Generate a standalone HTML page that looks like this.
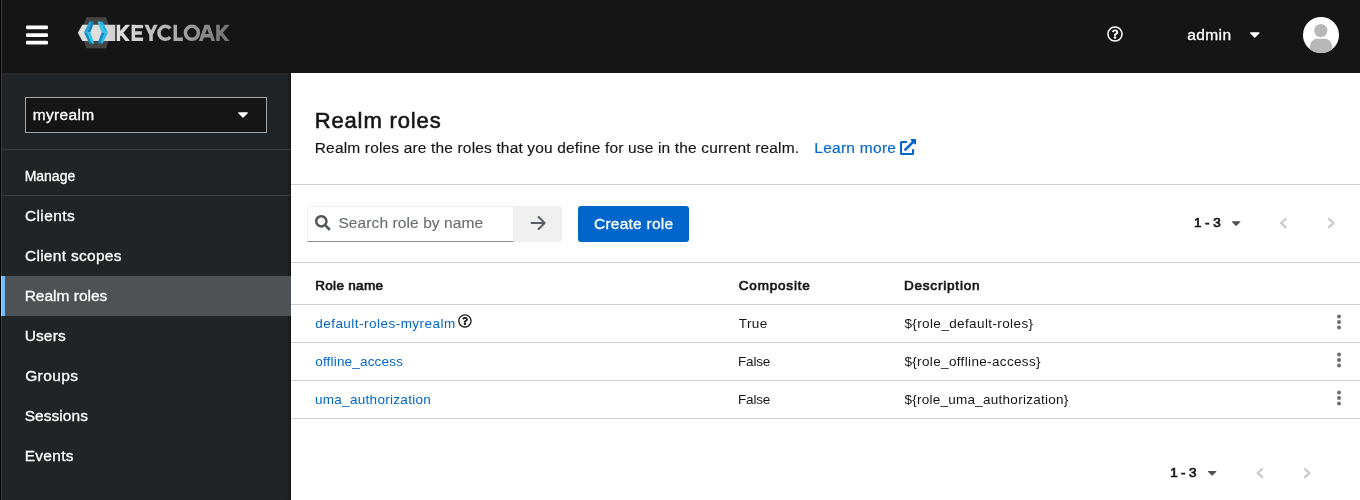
<!DOCTYPE html>
<html><head><meta charset="utf-8">
<style>
*{box-sizing:border-box;margin:0;padding:0}
html,body{width:1360px;height:500px;overflow:hidden;background:#fff;font-family:"Liberation Sans",sans-serif;color:#151515}
.abs{position:absolute}
svg{position:absolute;overflow:visible}
#edge0{left:0;top:0;width:1px;height:500px;background:#000}
#edge1{left:1px;top:0;width:1px;height:500px;background:#3d3d3d}
#header{left:2px;top:0;width:1358px;height:73px;background:#151515}
#sidebar{left:2px;top:73px;width:289px;height:427px;background:#212427}
.t{position:absolute;white-space:nowrap;line-height:1;-webkit-text-stroke:0.15px}
.w{color:#fff;-webkit-text-stroke:0.3px}
.nav{font-size:15.5px;color:#fff;-webkit-text-stroke:0.3px}
.hl{position:absolute;height:1px;background:#d2d2d2;left:291px;width:1069px}
.link{color:#0066cc}
.cell{font-size:13.5px;-webkit-text-stroke:0}
.b{font-weight:normal;-webkit-text-stroke:0.7px}
/*adj*/
#admin{letter-spacing:0.413px;margin-left:0.15px}
#myrealm{letter-spacing:0.350px;margin-left:-0.25px}
#manage{letter-spacing:-0.010px;margin-left:-0.35px}
#n1{letter-spacing:0.408px;margin-left:-0.10px}
#n2{letter-spacing:0.292px;margin-left:-0.10px}
#n3{letter-spacing:-0.005px;margin-left:-0.35px}
#n4{letter-spacing:0.137px;margin-left:-0.35px}
#n5{letter-spacing:0.400px;margin-left:0.15px}
#n6{letter-spacing:0.050px;margin-left:-0.35px}
#n7{letter-spacing:0.310px;margin-left:-0.35px}
#title{letter-spacing:0.870px;margin-left:-0.35px}
#desc{letter-spacing:0.161px;margin-left:-0.25px}
#learn{letter-spacing:0.272px;margin-left:-0.75px}
#search{letter-spacing:0.097px;margin-left:-0.60px}
#create{letter-spacing:0.235px;margin-left:0.05px}
#pg1{letter-spacing:0.488px;margin-left:-0.10px}
#h1{letter-spacing:0.312px;margin-left:0.20px}
#h2{letter-spacing:0.812px;margin-left:-0.25px}
#h3{letter-spacing:0.810px;margin-left:-0.10px}
#r1a{letter-spacing:0.477px;margin-left:0.20px}
#r2a{letter-spacing:0.188px;margin-left:0.20px}
#r3a{letter-spacing:0.300px;margin-left:-0.05px}
#r1b{letter-spacing:0.383px;margin-left:-0.25px}
#r2b{letter-spacing:-0.163px;margin-left:-1.00px}
#r3b{letter-spacing:-0.163px;margin-left:-1.00px}
#r1c{letter-spacing:0.392px;margin-left:0.40px}
#r2c{letter-spacing:0.350px;margin-left:0.40px}
#r3c{letter-spacing:0.260px;margin-left:0.40px}
#pg2{letter-spacing:0.375px;margin-left:-0.80px}
/*endadj*/
#pg1,#pg2{word-spacing:-1.1px}
</style></head><body>
<div class="abs" id="header"></div>
<div class="abs" id="sidebar"></div>
<div class="abs" style="left:2px;top:73px;width:289px;height:2px;background:#27292b"></div>
<div class="abs" style="left:287px;top:73px;width:4px;height:427px;background:linear-gradient(90deg,rgba(0,0,0,0),rgba(0,0,0,.4))"></div>
<div class="abs" id="edge0"></div>
<div class="abs" id="edge1"></div>

<div id="layer" style="position:absolute;left:0;top:0;width:1360px;height:500px;will-change:transform">
<!-- hamburger -->
<svg style="left:0;top:0" width="80" height="73">
<rect x="26" y="25.6" width="22" height="3.7" rx="1.2" fill="#fff"/>
<rect x="26" y="33.2" width="22" height="3.7" rx="1.2" fill="#fff"/>
<rect x="26" y="40.8" width="22" height="3.7" rx="1.2" fill="#fff"/>
</svg>

<!-- logo -->
<svg id="logo" style="left:0;top:0" width="260" height="73">
<defs>
<linearGradient id="gtxt" x1="116" x2="230" y1="0" y2="0" gradientUnits="userSpaceOnUse"><stop offset="0" stop-color="#e2e2e2"/><stop offset="0.4" stop-color="#b8b8b8"/><stop offset="1" stop-color="#707070"/></linearGradient>
<linearGradient id="gband" x1="78" x2="115" y1="0" y2="0" gradientUnits="userSpaceOnUse"><stop offset="0" stop-color="#e0e0e0"/><stop offset="0.6" stop-color="#dedcdc"/><stop offset="1" stop-color="#cfcfcf"/></linearGradient>
<clipPath id="capclip"><rect x="110" y="24.8" width="125" height="16.1"/></clipPath>
</defs>
<polygon points="81,32.8 86.4,17.3 106,17.3 111.4,32.8 106,48.3 86.4,48.3" fill="#444"/>
<polygon points="77.8,32.8 82.3,24.7 115.3,24.7 115.3,40.9 82.3,40.9" fill="url(#gband)"/>
<!-- left chevron -->
<polygon points="84,32.6 89.3,21.6 91.75,21.6 87.1,32.6" fill="#1ea6dc"/>
<polygon points="87.1,32.6 91.75,21.6 94.3,21.6 90.3,32.6" fill="#0d86ba"/>
<polygon points="84,32.6 87.1,32.6 91.75,43.4 89.3,43.4" fill="#0d8cc0"/>
<polygon points="87.1,32.6 90.3,32.6 94.3,43.4 91.75,43.4" fill="#2cc4ee"/>
<!-- right chevron -->
<polygon points="107.9,32.6 102.6,21.6 100.2,21.6 104.8,32.6" fill="#1fb4e6"/>
<polygon points="104.8,32.6 100.2,21.6 97.6,21.6 101.6,32.6" fill="#35c6ee"/>
<polygon points="107.9,32.6 104.8,32.6 100.2,43.4 102.6,43.4" fill="#25bdeb"/>
<polygon points="104.8,32.6 101.6,32.6 97.6,43.4 100.2,43.4" fill="#0c8cc2"/>
<g clip-path="url(#capclip)" stroke="url(#gtxt)" stroke-width="3.5" fill="none" stroke-linejoin="miter">
<path d="M118.45 24V42M119.2 34.85L128.65 23.8M120.9 32.5L128.45 41.9"/>
<path d="M133.35 24V42M133 26.45H143.1M133 32.95H141.9M133 39.25H143.1"/>
<path d="M144.7 22L150.7 34.6L156.7 22M150.7 33.2V42" transform="translate(0.35 0)"/>
<path d="M175.25 24V39.2H182.9"/>
<path d="M200.1 43L207.05 23.3L214 43M203 35.7H211.2"/>
<path d="M218 24V42M218.75 34.85L228.2 23.8M220.45 32.5L228 41.9"/>
</g>
<g stroke="url(#gtxt)" stroke-width="3.5" fill="none">
<path d="M170.28 28.5A6.5 6.5 0 1 0 170.28 37.2"/>
<circle cx="191.9" cy="32.85" r="6.5"/>
</g>
</svg>

<!-- header right -->
<svg style="left:1107px;top:26px" width="16" height="16" viewBox="0 0 512 512"><path fill="#fff" d="M256 8C119.043 8 8 119.083 8 256c0 136.997 111.043 248 248 248s248-111.003 248-248C504 119.083 392.957 8 256 8zm0 448c-110.532 0-200-89.431-200-200 0-110.495 89.472-200 200-200 110.491 0 200 89.471 200 200 0 110.53-89.431 200-200 200zm107.244-255.2c0 67.052-72.421 68.084-72.421 92.863V300c0 6.627-5.373 12-12 12h-45.647c-6.627 0-12-5.373-12-12v-8.659c0-35.745 27.1-50.034 47.579-61.516 17.561-9.845 28.324-16.541 28.324-29.579 0-17.246-21.999-28.693-39.784-28.693-23.189 0-33.894 10.977-48.942 29.969-4.057 5.12-11.46 6.071-16.666 2.124l-27.824-21.098c-5.107-3.872-6.251-11.066-2.644-16.363C184.846 131.491 214.94 112 261.794 112c49.071 0 101.45 38.304 101.45 88.8zM298 368c0 23.159-18.841 42-42 42s-42-18.841-42-42 18.841-42 42-42 42 18.841 42 42z"/></svg>
<div class="t w" id="admin" style="left:1187px;top:27px;font-size:15.5px">admin</div>
<svg style="left:0;top:0" width="1360" height="73"><path d="M1250.6 32.2h8.4a.6.6 0 0 1 .45 1l-4.2 4.2a.6.6 0 0 1-.9 0l-4.2-4.2a.6.6 0 0 1 .45-1z" fill="#fff"/>
<circle cx="1321" cy="35" r="18" fill="#fff"/>
<clipPath id="avc"><circle cx="1321" cy="35" r="18"/></clipPath>
<g clip-path="url(#avc)" fill="#b8b8b8"><circle cx="1320.8" cy="30.5" r="6.6"/><rect x="1309.8" y="38.8" width="22.4" height="24" rx="7.5"/></g>
</svg>

<!-- realm selector -->
<div class="abs" style="left:25px;top:97px;width:242px;height:36px;background:#151515;border:1px solid #a2a4a6"></div>
<div class="t w" id="myrealm" style="left:33px;top:107px;font-size:15.5px">myrealm</div>
<svg style="left:0;top:0" width="291" height="200"><path d="M238.7 112.2h8.6a.6.6 0 0 1 .45 1l-4.3 4.2a.6.6 0 0 1-.9 0l-4.3-4.2a.6.6 0 0 1 .45-1z" fill="#fff"/></svg>
<div class="abs" style="left:2px;top:149px;width:289px;height:1px;background:#3c3f42"></div>
<div class="t w" id="manage" style="left:25px;top:169px;font-size:14px">Manage</div>
<div class="abs" style="left:2px;top:195px;width:289px;height:1px;background:#3c3f42"></div>
<div class="abs" style="left:2px;top:276px;width:289px;height:40px;background:#4f5255"></div>
<div class="abs" style="left:1px;top:276px;width:1px;height:40px;background:#9fcdf5"></div>
<div class="abs" style="left:2px;top:276px;width:3px;height:40px;background:#73bcf7"></div>
<div class="t nav" id="n1" style="left:25px;top:208px">Clients</div>
<div class="t nav" id="n2" style="left:25px;top:248px">Client scopes</div>
<div class="t nav" id="n3" style="left:25px;top:288px">Realm roles</div>
<div class="t nav" id="n4" style="left:25px;top:328px">Users</div>
<div class="t nav" id="n5" style="left:25px;top:368px">Groups</div>
<div class="t nav" id="n6" style="left:25px;top:408px">Sessions</div>
<div class="t nav" id="n7" style="left:25px;top:448px">Events</div>

<!-- content -->
<div class="t" id="title" style="left:315px;top:110px;font-size:22px;-webkit-text-stroke:0.6px #151515">Realm roles</div>
<div class="t" id="desc" style="left:315px;top:140px;font-size:15.5px">Realm roles are the roles that you define for use in the current realm.</div>
<div class="t link" id="learn" style="left:815px;top:140px;font-size:15.5px">Learn more</div>
<svg style="left:900px;top:139px" width="16" height="16" viewBox="0 0 512 512"><path fill="#0066cc" d="M432,320H400a16,16,0,0,0-16,16V448H64V128H208a16,16,0,0,0,16-16V80a16,16,0,0,0-16-16H48A48,48,0,0,0,0,112V464a48,48,0,0,0,48,48H400a48,48,0,0,0,48-48V336A16,16,0,0,0,432,320ZM488,0h-128c-21.37,0-32.05,25.91-17,41l35.73,35.73L135,320.37a24,24,0,0,0,0,34L157.67,377a24,24,0,0,0,34,0L435.28,133.32,471,169c15,15,41,4.5,41-17V24A24,24,0,0,0,488,0Z"/></svg>
<div class="hl" style="top:184px"></div>

<!-- toolbar -->
<div class="abs" style="left:307px;top:206px;width:207px;height:36px;background:#fff;border:1px solid #f0f0f0;border-bottom:1px solid #8a8d90"></div>
<svg style="left:315.4px;top:215px" width="15.6" height="15.6" viewBox="0 0 512 512"><path fill="#53565a" d="M505 442.7L405.3 343c-4.5-4.5-10.6-7-17-7H372c27.600-35.300 44-79.700 44-128C416 93.100 322.900 0 208 0S0 93.100 0 208s93.100 208 208 208c48.300 0 92.700-16.400 128-44v16.300c0 6.400 2.500 12.500 7 17l99.700 99.700c9.400 9.400 24.600 9.400 33.900 0l28.300-28.300c9.400-9.400 9.400-24.600.1-34zM208 336c-70.700 0-128-57.200-128-128 0-70.700 57.200-128 128-128 70.700 0 128 57.200 128 128 0 70.700-57.200 128-128 128z"/></svg>
<div class="t" id="search" style="left:339px;top:215px;font-size:15.5px;color:#6a6e73">Search role by name</div>
<div class="abs" style="left:514px;top:206px;width:48px;height:36px;background:#f0f0f0;border-radius:0 3px 3px 0"></div>
<svg style="left:0;top:0" width="700" height="260"><path d="M531.6 223h12.6M538.6 217l6 6-6 6" fill="none" stroke="#5c5f63" stroke-width="2" stroke-linecap="round" stroke-linejoin="round"/></svg>
<div class="abs" style="left:578px;top:206px;width:111px;height:36px;background:#0066cc;border-radius:3px"></div>
<div class="t w" id="create" style="left:594px;top:216px;font-size:15.5px">Create role</div>

<div class="t b" id="pg1" style="left:1194px;top:216px;font-size:13.5px">1 - 3</div>
<svg style="left:0;top:0" width="1360" height="500">
<path d="M1232.3 221.2h7.6a.5.5 0 0 1 .4.85l-3.8 3.8a.5.5 0 0 1-.75 0l-3.8-3.8a.5.5 0 0 1 .35-.85z" fill="#4f5255"/>
<path d="M1285.6 219l-4.5 4.1 4.5 4.1" fill="none" stroke="#cbcbcb" stroke-width="2.3" stroke-linecap="round" stroke-linejoin="round"/>
<path d="M1329 219l4.5 4.1-4.5 4.1" fill="none" stroke="#cbcbcb" stroke-width="2.3" stroke-linecap="round" stroke-linejoin="round"/>
<path d="M1208.3 470.9h7.6a.5.5 0 0 1 .4.85l-3.8 3.8a.5.5 0 0 1-.75 0l-3.8-3.8a.5.5 0 0 1 .35-.85z" fill="#4f5255"/>
<path d="M1262.2 469l-4.5 4.1 4.5 4.1" fill="none" stroke="#cbcbcb" stroke-width="2.3" stroke-linecap="round" stroke-linejoin="round"/>
<path d="M1305 469l4.5 4.1-4.5 4.1" fill="none" stroke="#cbcbcb" stroke-width="2.3" stroke-linecap="round" stroke-linejoin="round"/>
<g fill="#6a6e73">
<circle cx="1339" cy="316.4" r="2"/><circle cx="1339" cy="322" r="2"/><circle cx="1339" cy="327.6" r="2"/>
<circle cx="1339" cy="354.4" r="2"/><circle cx="1339" cy="360" r="2"/><circle cx="1339" cy="365.6" r="2"/>
<circle cx="1339" cy="392.4" r="2"/><circle cx="1339" cy="398" r="2"/><circle cx="1339" cy="403.6" r="2"/>
</g>
</svg>

<!-- table -->
<div class="hl" style="top:262px"></div>
<div class="t cell b" id="h1" style="left:315px;top:279px">Role name</div>
<div class="t cell b" id="h2" style="left:739px;top:279px">Composite</div>
<div class="t cell b" id="h3" style="left:904px;top:279px">Description</div>
<div class="hl" style="top:304px"></div>
<div class="t cell link" id="r1a" style="left:315px;top:317px">default-roles-myrealm</div>
<svg style="left:458.1px;top:314.1px" width="13.9" height="13.9" viewBox="0 0 512 512"><path fill="#151515" d="M256 8C119.043 8 8 119.083 8 256c0 136.997 111.043 248 248 248s248-111.003 248-248C504 119.083 392.957 8 256 8zm0 448c-110.532 0-200-89.431-200-200 0-110.495 89.472-200 200-200 110.491 0 200 89.471 200 200 0 110.53-89.431 200-200 200zm107.244-255.2c0 67.052-72.421 68.084-72.421 92.863V300c0 6.627-5.373 12-12 12h-45.647c-6.627 0-12-5.373-12-12v-8.659c0-35.745 27.1-50.034 47.579-61.516 17.561-9.845 28.324-16.541 28.324-29.579 0-17.246-21.999-28.693-39.784-28.693-23.189 0-33.894 10.977-48.942 29.969-4.057 5.12-11.46 6.071-16.666 2.124l-27.824-21.098c-5.107-3.872-6.251-11.066-2.644-16.363C184.846 131.491 214.94 112 261.794 112c49.071 0 101.450 38.304 101.450 88.8zM298 368c0 23.159-18.841 42-42 42s-42-18.841-42-42 18.841-42 42-42 42 18.841 42 42z"/></svg>
<div class="t cell" id="r1b" style="left:739px;top:317px">True</div>
<div class="t cell" id="r1c" style="left:904px;top:317px">${role_default-roles}</div>
<div class="hl" style="top:342px"></div>
<div class="t cell link" id="r2a" style="left:315px;top:355px">offline_access</div>
<div class="t cell" id="r2b" style="left:739px;top:355px">False</div>
<div class="t cell" id="r2c" style="left:904px;top:355px">${role_offline-access}</div>
<div class="hl" style="top:380px"></div>
<div class="t cell link" id="r3a" style="left:315px;top:393px">uma_authorization</div>
<div class="t cell" id="r3b" style="left:739px;top:393px">False</div>
<div class="t cell" id="r3c" style="left:904px;top:393px">${role_uma_authorization}</div>
<div class="hl" style="top:418px"></div>
<div class="t b" id="pg2" style="left:1171px;top:466px;font-size:13.5px">1 - 3</div>
</div>
</body></html>
